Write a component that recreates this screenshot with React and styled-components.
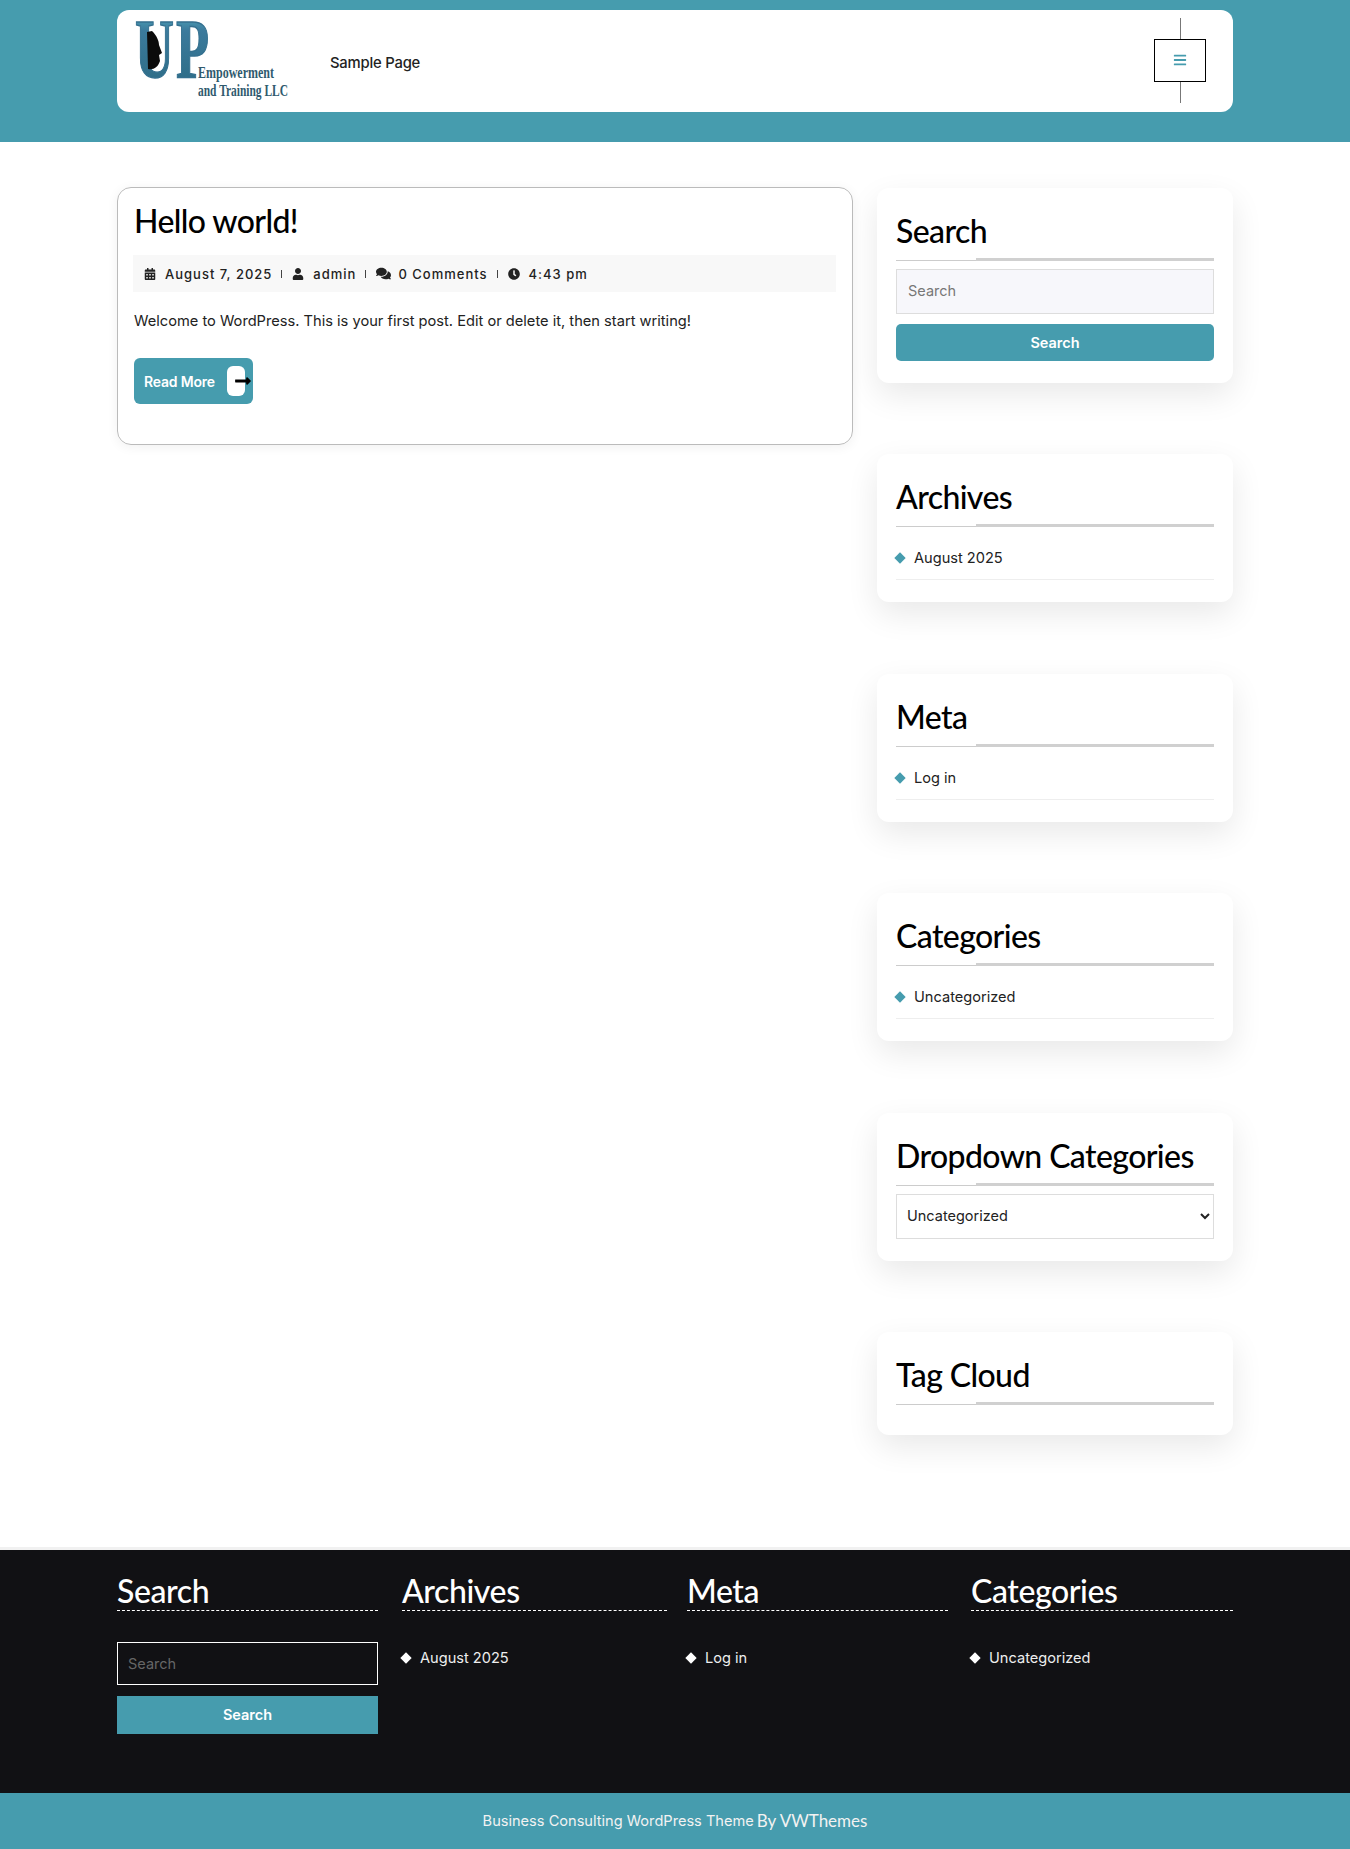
import React from "react";
import styled, { createGlobalStyle } from "styled-components";
import {
  FaBars,
  FaCalendarAlt,
  FaClock,
  FaComments,
  FaLongArrowAltRight,
  FaUser,
} from "react-icons/fa";

const TEAL = "#469cae";
const BODY_FONT = `"Inter", "Liberation Sans", sans-serif`;
const HEAD_FONT = `"Lato", "Open Sans", sans-serif`;

const GlobalStyle = createGlobalStyle`
  * {
    box-sizing: border-box;
  }

  body {
    margin: 0;
    background: #fff;
    color: #111;
    font-family: ${BODY_FONT};
  }
`;

const Container = styled.div`
  width: 1116px;
  margin: 0 auto;
`;

const TopBar = styled.header`
  background: ${TEAL};
  padding: 10px 0 30px;
`;

const HeaderBox = styled(Container)`
  height: 102px;
  background: #fff;
  border-radius: 12px;
  display: flex;
  align-items: center;
  padding: 0 27px 0 18px;
`;

const LogoMark = styled.svg`
  overflow: visible;
  flex: none;
`;

const NavLink = styled.a`
  margin-left: 40px;
  font-size: 14.8px;
  font-weight: 500;
  letter-spacing: -0.2px;
  color: #222;
  position: relative;
  top: 2px;
`;

const MenuToggle = styled.div`
  margin: -2px 0 0 auto;
  display: flex;
  flex-direction: column;
  align-items: center;
`;

const ToggleLine = styled.span`
  width: 1px;
  height: 21px;
  background: #777;
`;

const ToggleBox = styled.div`
  width: 52px;
  height: 43px;
  border: 1px solid #000;
  display: flex;
  align-items: center;
  justify-content: center;
  color: ${TEAL};
  font-size: 14px;
`;

const Content = styled(Container)`
  display: grid;
  grid-template-columns: 736px 356px;
  column-gap: 24px;
  align-items: start;
  padding: 45px 0 115px;
`;

const PostCard = styled.article`
  height: 258px;
  border: 1px solid #bbb;
  border-radius: 14px;
  padding: 13px 16px;
  box-shadow: 0 2px 12px rgba(0, 0, 0, 0.06);
`;

const PostTitle = styled.h1`
  margin: 0;
  font-family: ${HEAD_FONT};
  font-size: 32px;
  line-height: 40px;
  font-weight: 500;
  letter-spacing: -0.6px;
  color: #000;
`;

const MetaBar = styled.div`
  margin: 14px 0 0 -1px;
  height: 37px;
  background: #f8f8f8;
  display: flex;
  align-items: center;
  padding-left: 11px;
  font-size: 13px;
  font-weight: 500;
  letter-spacing: 1px;
  color: #222;
`;

const MetaItem = styled.span`
  display: flex;
  align-items: center;
  gap: ${(props) => props.$gap || 9}px;

  svg {
    font-size: ${(props) => props.$icon || 12}px;
  }
`;

const MetaSep = styled.span`
  width: 1px;
  height: 8px;
  background: #444;
  margin: 0 10px 0 9px;
`;

const PostText = styled.p`
  margin: 17px 0 0;
  font-size: 14.65px;
  line-height: 24px;
  color: #222;
`;

const ReadMore = styled.a`
  margin-top: 25px;
  width: 119px;
  height: 46px;
  background: ${TEAL};
  border-radius: 6px;
  display: flex;
  align-items: center;
  justify-content: space-between;
  padding: 0 8px 0 10px;
  color: #fff;
  font-size: 14px;
  font-weight: 600;
  letter-spacing: -0.2px;
`;

const ArrowPill = styled.span`
  position: relative;
  width: 18px;
  height: 30px;
  background: #fff;
  border-radius: 6px;

  svg {
    position: absolute;
    left: 7px;
    top: 6px;
    font-size: 18px;
    color: #000;
  }
`;

const Sidebar = styled.aside`
  margin-top: 1px;
  display: flex;
  flex-direction: column;
  gap: 71.4px;
`;

const Widget = styled.section`
  background: #fff;
  border-radius: 12px;
  padding: 20px 19px 22px;
  box-shadow: 0 12px 32px rgba(0, 0, 0, 0.09);
`;

const WidgetTitle = styled.h2`
  position: relative;
  margin: 0 0 8px;
  height: 53px;
  border-bottom: 1px solid #ccc;
  font-family: ${HEAD_FONT};
  font-size: 32px;
  line-height: 46px;
  font-weight: 500;
  letter-spacing: -0.6px;
  color: #000;

  &::after {
    content: "";
    position: absolute;
    left: 80px;
    right: 0;
    bottom: -1px;
    height: 3px;
    background: #d0d0d0;
  }
`;

const SearchInput = styled.input`
  display: block;
  width: 100%;
  height: 45px;
  padding: 0 11px 2px;
  border: 1px solid #ddd;
  background: #f7f7fb;
  font-family: ${BODY_FONT};
  font-size: 14.5px;
  outline: none;

  &::placeholder {
    color: #777;
  }
`;

const SearchButton = styled.button`
  display: block;
  width: 100%;
  height: 37px;
  margin-top: 10px;
  border: 0;
  border-radius: 5px;
  background: ${TEAL};
  color: #fff;
  font-family: ${BODY_FONT};
  font-size: 14.5px;
  font-weight: 600;
`;

const List = styled.ul`
  list-style: none;
  margin: 0;
  padding: ${(props) => (props.$dark ? "7px 0 0" : "0")};
`;

const ListItem = styled.li`
  display: flex;
  align-items: center;
  gap: 10px;
  height: ${(props) => (props.$dark ? "auto" : "45px")};
  padding-top: ${(props) => (props.$dark ? "0" : "2px")};
  border-bottom: ${(props) => (props.$dark ? "0" : "1px solid #eee")};
  font-size: 14.6px;
  color: ${(props) => (props.$dark ? "#eee" : "#222")};

  &::before {
    content: "";
    width: 8px;
    height: 8px;
    transform: rotate(45deg);
    background: ${(props) => (props.$dark ? "#fff" : TEAL)};
  }
`;

const CategorySelect = styled.select`
  display: block;
  width: 100%;
  height: 45px;
  padding: 0 6px 2px;
  border: 1px solid #ddd;
  background: #fff;
  font-family: ${BODY_FONT};
  font-size: 14.5px;
  color: #222;
`;

const FooterWidgets = styled.footer`
  background: #111114;
  height: 243px;
  padding-top: 20px;
  box-shadow: 0 -3px 0 #f1f1f1;
`;

const FooterGrid = styled(Container)`
  display: grid;
  grid-template-columns: 285px 285px 284px 262px;
`;

const FooterCol = styled.div`
  padding-right: ${(props) => props.$gutter || 0}px;
`;

const FooterTitle = styled.h3`
  margin: 0 0 31px;
  height: 41px;
  border-bottom: 1px dashed #fff;
  font-family: ${HEAD_FONT};
  font-size: 32px;
  line-height: 42px;
  font-weight: 500;
  letter-spacing: -0.4px;
  color: #fff;
`;

const FooterInput = styled.input`
  display: block;
  width: 100%;
  height: 43px;
  padding: 0 10px;
  border: 1px solid #fff;
  background: transparent;
  font-family: ${BODY_FONT};
  font-size: 14.5px;
  outline: none;

  &::placeholder {
    color: #666;
  }
`;

const FooterButton = styled.button`
  display: block;
  width: 100%;
  height: 38px;
  margin-top: 11px;
  border: 0;
  background: ${TEAL};
  color: #fff;
  font-family: ${BODY_FONT};
  font-size: 14.5px;
  font-weight: 600;
`;

const Copyright = styled.div`
  height: 56px;
  background: ${TEAL};
  display: flex;
  align-items: center;
  justify-content: center;
  gap: 3px;
  color: #f2f2f2;
  font-size: 14.6px;
`;

const CopyrightLink = styled.span`
  font-family: ${HEAD_FONT};
  font-size: 17px;
`;

const Logo = () => (
  <LogoMark width="155" height="82" viewBox="0 0 155 82">
    <defs>
      <linearGradient id="logoFill" x1="0" y1="0" x2="0" y2="1">
        <stop offset="0" stopColor="#5cc0cc" />
        <stop offset="0.3" stopColor="#3b7a9c" />
        <stop offset="1" stopColor="#2b6a82" />
      </linearGradient>
    </defs>
    <text
      x="0"
      y="58"
      textLength="39"
      lengthAdjust="spacingAndGlyphs"
      fontFamily="Liberation Serif"
      fontWeight="700"
      fontSize="84"
      fill="url(#logoFill)"
      stroke="#34708f"
      strokeWidth="1.4"
    >
      U
    </text>
    <text
      x="41"
      y="58"
      textLength="33"
      lengthAdjust="spacingAndGlyphs"
      fontFamily="Liberation Serif"
      fontWeight="700"
      fontSize="84"
      fill="url(#logoFill)"
      stroke="#34708f"
      strokeWidth="1.4"
    >
      P
    </text>
    <path
      d="M12 12 L17 11 C22 16 24 21 24 25 L27 33 L24 35 L25 41 C23 47 19 50 13 49 Z"
      fill="#0b0b0b"
    />
    <text
      x="63"
      y="58"
      textLength="76"
      lengthAdjust="spacingAndGlyphs"
      fontFamily="Liberation Serif"
      fontWeight="700"
      fontSize="16"
      fill="#2f5a6e"
    >
      Empowerment
    </text>
    <text
      x="63"
      y="76"
      textLength="90"
      lengthAdjust="spacingAndGlyphs"
      fontFamily="Liberation Serif"
      fontWeight="700"
      fontSize="16"
      fill="#2f5a6e"
    >
      and Training LLC
    </text>
  </LogoMark>
);

const App = () => {
  return (
    <>
      <GlobalStyle />
      <TopBar>
        <HeaderBox>
          <Logo />
          <NavLink>Sample Page</NavLink>
          <MenuToggle>
            <ToggleLine />
            <ToggleBox>
              <FaBars />
            </ToggleBox>
            <ToggleLine />
          </MenuToggle>
        </HeaderBox>
      </TopBar>

      <Content>
        <PostCard>
          <PostTitle>Hello world!</PostTitle>
          <MetaBar>
            <MetaItem>
              <FaCalendarAlt />
              August 7, 2025
            </MetaItem>
            <MetaSep />
            <MetaItem>
              <FaUser />
              admin
            </MetaItem>
            <MetaSep />
            <MetaItem $icon={15} $gap={7}>
              <FaComments />
              0 Comments
            </MetaItem>
            <MetaSep />
            <MetaItem>
              <FaClock />
              4:43 pm
            </MetaItem>
          </MetaBar>
          <PostText>
            Welcome to WordPress. This is your first post. Edit or delete it,
            then start writing!
          </PostText>
          <ReadMore>
            Read More
            <ArrowPill>
              <FaLongArrowAltRight />
            </ArrowPill>
          </ReadMore>
        </PostCard>

        <Sidebar>
          <Widget>
            <WidgetTitle>Search</WidgetTitle>
            <SearchInput placeholder="Search" />
            <SearchButton>Search</SearchButton>
          </Widget>
          <Widget>
            <WidgetTitle>Archives</WidgetTitle>
            <List>
              <ListItem>August 2025</ListItem>
            </List>
          </Widget>
          <Widget>
            <WidgetTitle>Meta</WidgetTitle>
            <List>
              <ListItem>Log in</ListItem>
            </List>
          </Widget>
          <Widget>
            <WidgetTitle>Categories</WidgetTitle>
            <List>
              <ListItem>Uncategorized</ListItem>
            </List>
          </Widget>
          <Widget>
            <WidgetTitle>Dropdown Categories</WidgetTitle>
            <CategorySelect defaultValue="Uncategorized">
              <option>Uncategorized</option>
            </CategorySelect>
          </Widget>
          <Widget>
            <WidgetTitle>Tag Cloud</WidgetTitle>
          </Widget>
        </Sidebar>
      </Content>

      <FooterWidgets>
        <FooterGrid>
          <FooterCol $gutter={24}>
            <FooterTitle>Search</FooterTitle>
            <FooterInput placeholder="Search" />
            <FooterButton>Search</FooterButton>
          </FooterCol>
          <FooterCol $gutter={20}>
            <FooterTitle>Archives</FooterTitle>
            <List $dark>
              <ListItem $dark>August 2025</ListItem>
            </List>
          </FooterCol>
          <FooterCol $gutter={23}>
            <FooterTitle>Meta</FooterTitle>
            <List $dark>
              <ListItem $dark>Log in</ListItem>
            </List>
          </FooterCol>
          <FooterCol>
            <FooterTitle>Categories</FooterTitle>
            <List $dark>
              <ListItem $dark>Uncategorized</ListItem>
            </List>
          </FooterCol>
        </FooterGrid>
      </FooterWidgets>
      <Copyright>
        Business Consulting WordPress Theme
        <CopyrightLink>By VWThemes</CopyrightLink>
      </Copyright>
    </>
  );
};

export default App;
